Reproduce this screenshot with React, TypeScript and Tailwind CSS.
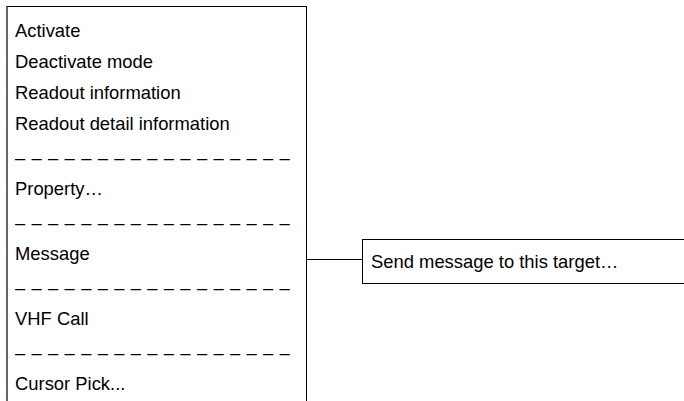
const rows: { label?: string; sep?: boolean }[] = [
  { label: "Activate" },
  { label: "Deactivate mode" },
  { label: "Readout information" },
  { label: "Readout detail information" },
  { sep: true },
  { label: "Property…" },
  { sep: true },
  { label: "Message" },
  { sep: true },
  { label: "VHF Call" },
  { sep: true },
  { label: "Cursor Pick..." },
]

const dashes = Array(17).fill("–").join(" ")

export default function App() {
  return (
    <div
      className="h-[401px] w-[684px] overflow-hidden bg-white text-[18.4px] text-black"
      style={{ fontFamily: '"Liberation Sans", Arial, sans-serif' }}
    >
      <div className="flex items-start">
        <div className="ml-[6px] mt-[6px] h-[420px] w-[301px] shrink-0 border-t border-r border-l-2 border-black border-l-[#666] pl-[7px] pt-[7.5px]">
          {rows.map((r, i) =>
            r.sep ? (
              <div key={i} className="h-[34px] whitespace-nowrap pt-[4px] leading-[30px] tracking-[0.6px]">
                {dashes}
              </div>
            ) : (
              <div key={i} className="h-[31px] whitespace-nowrap leading-[31px]">
                {r.label}
              </div>
            )
          )}
        </div>
        <div className="mt-[239px] flex shrink-0 items-start">
          <div className="mt-[20px] h-px w-[55px] bg-black" />
          <div className="h-[45px] w-[340px] border border-black pl-[8px] leading-[43px] whitespace-nowrap">
            Send message to this target…
          </div>
        </div>
      </div>
    </div>
  )
}
